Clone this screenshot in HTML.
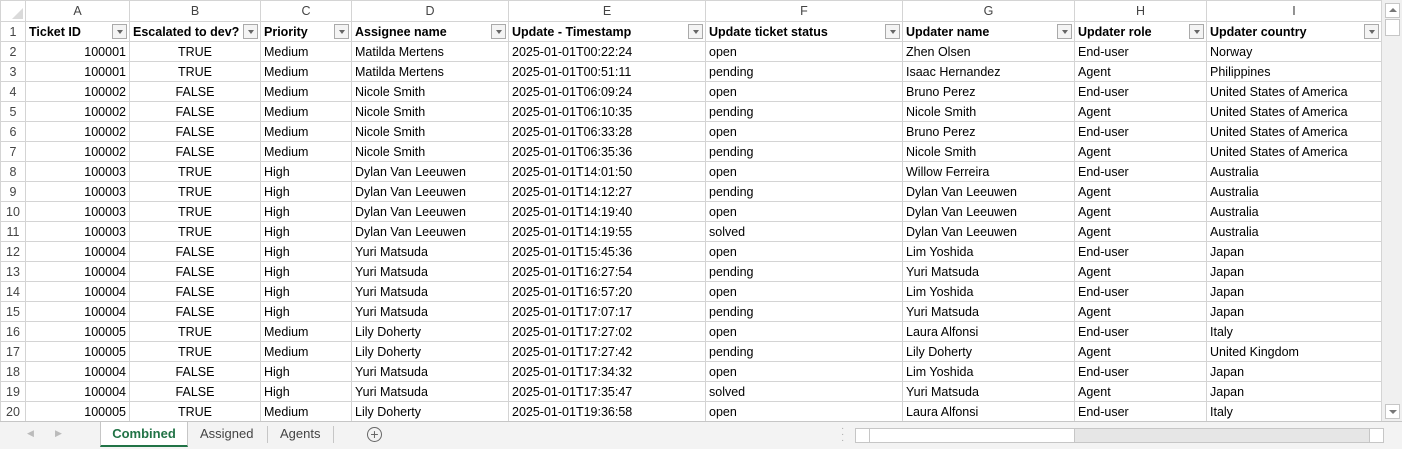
<!DOCTYPE html>
<html><head><meta charset="utf-8"><style>
*{margin:0;padding:0;box-sizing:border-box}
body{width:1402px;height:449px;overflow:hidden;background:#fff;font-family:"Liberation Sans",sans-serif;font-size:12.5px;color:#000;position:relative}
table{border-collapse:collapse;table-layout:fixed;position:absolute;left:0;top:0;width:1381px}
td{border:1px solid #d4d4d4;height:20px;padding:0 3px;white-space:nowrap;overflow:hidden;line-height:18px}
tr.ch td{height:21px;background:#fff;color:#444;text-align:center;border-color:#d4d4d4;font-size:12.5px}
td.rh{background:#fff;color:#444;text-align:center;padding:0}
tr.h td:not(.rh){font-weight:bold;position:relative}
.f{position:absolute;right:2px;top:2px;width:15px;height:15px;border:1px solid #aaa;background:#f4f4f4}
.f:after{content:"";position:absolute;left:4px;top:5px;border-left:3px solid transparent;border-right:3px solid transparent;border-top:4px solid #666}
.r{text-align:right}.c{text-align:center}
#vs{position:absolute;left:1381px;top:0;width:21px;height:421px;background:#f0f0f0;border-left:1px solid #d4d4d4}
#tabs{position:absolute;left:0;top:421px;width:1402px;height:28px;background:#f3f3f3;border-top:1px solid #c6c6c6}
.tab{position:absolute;top:0;height:25px;line-height:24px;font-size:13px;color:#444}
</style></head><body>
<table>
<colgroup><col style="width:25px"><col style="width:104px"><col style="width:131px"><col style="width:91px"><col style="width:157px"><col style="width:197px"><col style="width:197px"><col style="width:172px"><col style="width:132px"><col style="width:175px"></colgroup>
<tr class="ch"><td style="background:#fff;position:relative"><div style="position:absolute;right:2px;bottom:2px;width:0;height:0;border-left:11px solid transparent;border-bottom:11px solid #dadada"></div></td><td>A</td><td>B</td><td>C</td><td>D</td><td>E</td><td>F</td><td>G</td><td>H</td><td>I</td></tr>
<tr class="h"><td class="rh">1</td><td>Ticket ID<span class="f"></span></td><td>Escalated to dev?<span class="f"></span></td><td>Priority<span class="f"></span></td><td>Assignee name<span class="f"></span></td><td>Update - Timestamp<span class="f"></span></td><td>Update ticket status<span class="f"></span></td><td>Updater name<span class="f"></span></td><td>Updater role<span class="f"></span></td><td>Updater country<span class="f"></span></td></tr>
<tr><td class="rh">2</td><td class="r">100001</td><td class="c">TRUE</td><td>Medium</td><td>Matilda Mertens</td><td>2025-01-01T00:22:24</td><td>open</td><td>Zhen Olsen</td><td>End-user</td><td>Norway</td></tr>
<tr><td class="rh">3</td><td class="r">100001</td><td class="c">TRUE</td><td>Medium</td><td>Matilda Mertens</td><td>2025-01-01T00:51:11</td><td>pending</td><td>Isaac Hernandez</td><td>Agent</td><td>Philippines</td></tr>
<tr><td class="rh">4</td><td class="r">100002</td><td class="c">FALSE</td><td>Medium</td><td>Nicole Smith</td><td>2025-01-01T06:09:24</td><td>open</td><td>Bruno Perez</td><td>End-user</td><td>United States of America</td></tr>
<tr><td class="rh">5</td><td class="r">100002</td><td class="c">FALSE</td><td>Medium</td><td>Nicole Smith</td><td>2025-01-01T06:10:35</td><td>pending</td><td>Nicole Smith</td><td>Agent</td><td>United States of America</td></tr>
<tr><td class="rh">6</td><td class="r">100002</td><td class="c">FALSE</td><td>Medium</td><td>Nicole Smith</td><td>2025-01-01T06:33:28</td><td>open</td><td>Bruno Perez</td><td>End-user</td><td>United States of America</td></tr>
<tr><td class="rh">7</td><td class="r">100002</td><td class="c">FALSE</td><td>Medium</td><td>Nicole Smith</td><td>2025-01-01T06:35:36</td><td>pending</td><td>Nicole Smith</td><td>Agent</td><td>United States of America</td></tr>
<tr><td class="rh">8</td><td class="r">100003</td><td class="c">TRUE</td><td>High</td><td>Dylan Van Leeuwen</td><td>2025-01-01T14:01:50</td><td>open</td><td>Willow Ferreira</td><td>End-user</td><td>Australia</td></tr>
<tr><td class="rh">9</td><td class="r">100003</td><td class="c">TRUE</td><td>High</td><td>Dylan Van Leeuwen</td><td>2025-01-01T14:12:27</td><td>pending</td><td>Dylan Van Leeuwen</td><td>Agent</td><td>Australia</td></tr>
<tr><td class="rh">10</td><td class="r">100003</td><td class="c">TRUE</td><td>High</td><td>Dylan Van Leeuwen</td><td>2025-01-01T14:19:40</td><td>open</td><td>Dylan Van Leeuwen</td><td>Agent</td><td>Australia</td></tr>
<tr><td class="rh">11</td><td class="r">100003</td><td class="c">TRUE</td><td>High</td><td>Dylan Van Leeuwen</td><td>2025-01-01T14:19:55</td><td>solved</td><td>Dylan Van Leeuwen</td><td>Agent</td><td>Australia</td></tr>
<tr><td class="rh">12</td><td class="r">100004</td><td class="c">FALSE</td><td>High</td><td>Yuri Matsuda</td><td>2025-01-01T15:45:36</td><td>open</td><td>Lim Yoshida</td><td>End-user</td><td>Japan</td></tr>
<tr><td class="rh">13</td><td class="r">100004</td><td class="c">FALSE</td><td>High</td><td>Yuri Matsuda</td><td>2025-01-01T16:27:54</td><td>pending</td><td>Yuri Matsuda</td><td>Agent</td><td>Japan</td></tr>
<tr><td class="rh">14</td><td class="r">100004</td><td class="c">FALSE</td><td>High</td><td>Yuri Matsuda</td><td>2025-01-01T16:57:20</td><td>open</td><td>Lim Yoshida</td><td>End-user</td><td>Japan</td></tr>
<tr><td class="rh">15</td><td class="r">100004</td><td class="c">FALSE</td><td>High</td><td>Yuri Matsuda</td><td>2025-01-01T17:07:17</td><td>pending</td><td>Yuri Matsuda</td><td>Agent</td><td>Japan</td></tr>
<tr><td class="rh">16</td><td class="r">100005</td><td class="c">TRUE</td><td>Medium</td><td>Lily Doherty</td><td>2025-01-01T17:27:02</td><td>open</td><td>Laura Alfonsi</td><td>End-user</td><td>Italy</td></tr>
<tr><td class="rh">17</td><td class="r">100005</td><td class="c">TRUE</td><td>Medium</td><td>Lily Doherty</td><td>2025-01-01T17:27:42</td><td>pending</td><td>Lily Doherty</td><td>Agent</td><td>United Kingdom</td></tr>
<tr><td class="rh">18</td><td class="r">100004</td><td class="c">FALSE</td><td>High</td><td>Yuri Matsuda</td><td>2025-01-01T17:34:32</td><td>open</td><td>Lim Yoshida</td><td>End-user</td><td>Japan</td></tr>
<tr><td class="rh">19</td><td class="r">100004</td><td class="c">FALSE</td><td>High</td><td>Yuri Matsuda</td><td>2025-01-01T17:35:47</td><td>solved</td><td>Yuri Matsuda</td><td>Agent</td><td>Japan</td></tr>
<tr><td class="rh">20</td><td class="r">100005</td><td class="c">TRUE</td><td>Medium</td><td>Lily Doherty</td><td>2025-01-01T19:36:58</td><td>open</td><td>Laura Alfonsi</td><td>End-user</td><td>Italy</td></tr>
</table>
<div id="vs">
<div style="position:absolute;left:3px;top:3px;width:15px;height:15px;border:1px solid #c6c6c6;background:#fff"><div style="margin:4px 0 0 3px;width:0;border-left:4px solid transparent;border-right:4px solid transparent;border-bottom:4px solid #777"></div></div>
<div style="position:absolute;left:3px;top:19px;width:15px;height:17px;border:1px solid #c6c6c6;background:#fff"></div>
<div style="position:absolute;left:3px;top:404px;width:15px;height:15px;border:1px solid #c6c6c6;background:#fff"><div style="margin:5px 0 0 3px;width:0;border-left:4px solid transparent;border-right:4px solid transparent;border-top:4px solid #777"></div></div>
</div>
<div id="tabs">
<span style="position:absolute;left:27px;top:6px;color:#bbb;font-size:9px">◀</span>
<span style="position:absolute;left:55px;top:6px;color:#bbb;font-size:9px">▶</span>
<div class="tab" style="left:100px;width:88px;background:#fff;border-bottom:2px solid #217346;border-left:1px solid #c6c6c6;border-right:1px solid #c6c6c6;color:#217346;font-weight:bold;text-align:center">Combined</div>
<div class="tab" style="left:200px">Assigned</div>
<div style="position:absolute;left:267px;top:4px;width:1px;height:17px;background:#c6c6c6"></div>
<div class="tab" style="left:280px">Agents</div>
<div style="position:absolute;left:333px;top:4px;width:1px;height:17px;background:#c6c6c6"></div>
<div style="position:absolute;left:367px;top:5px;width:15px;height:15px;border:1.5px solid #666;border-radius:50%;text-align:center;line-height:12px;font-size:14px;color:#666">+</div>
<span style="position:absolute;left:841px;top:4px;color:#aaa;font-size:10px;line-height:6px">·<br>·<br>·</span>
<div style="position:absolute;left:855px;top:6px;width:529px;height:15px;background:#e6e6e6;border:1px solid #c6c6c6">
<div style="position:absolute;left:0;top:0;width:14px;height:13px;background:#fff;border-right:1px solid #c6c6c6"></div>
<div style="position:absolute;left:14px;top:0;width:205px;height:13px;background:#fff;border-right:1px solid #c6c6c6"></div>
<div style="position:absolute;right:0;top:0;width:14px;height:13px;background:#fff;border-left:1px solid #c6c6c6"></div>
</div>
</div>
</body></html>
